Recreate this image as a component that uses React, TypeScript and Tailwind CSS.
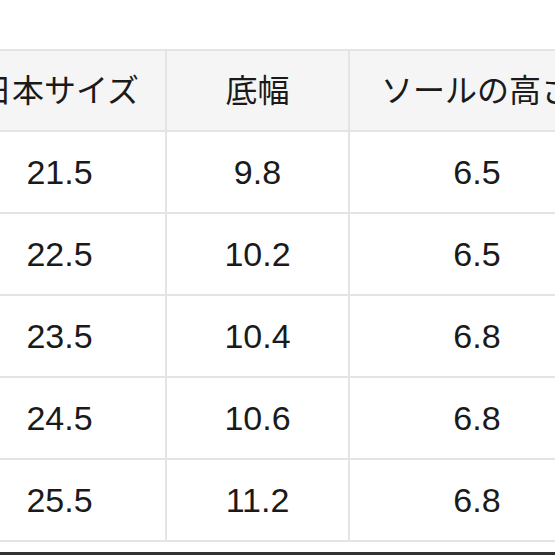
const headers = ['日本サイズ', '底幅', 'ソールの高さ'];

const rows = [
  ['21.5', '9.8', '6.5'],
  ['22.5', '10.2', '6.5'],
  ['23.5', '10.4', '6.8'],
  ['24.5', '10.6', '6.8'],
  ['25.5', '11.2', '6.8'],
];

export default function App() {
  return (
    <div
      className="w-[555px] h-[555px] overflow-hidden bg-white flex flex-col text-[#1a1a1a]"
      style={{ fontFamily: '"Liberation Sans", "Noto Sans CJK JP", sans-serif' }}
    >
      <div className="mt-[49px] ml-[-46px] w-[652px] border-t-2 border-[#e4e4e4] grid grid-cols-[213px_183px_256px]">
        {headers.map((h) => (
          <div
            key={h}
            className="h-[81px] flex items-center justify-center bg-[#f5f5f5] border-r-2 border-b-2 border-[#e4e4e4] text-[32px] whitespace-nowrap"
          >
            {h}
          </div>
        ))}
        {rows.map((r, i) =>
          r.map((v, j) => (
            <div
              key={`${i}-${j}`}
              className="h-[82px] flex items-center justify-center border-r-2 border-b-2 border-[#e4e4e4] text-[34px]"
            >
              {v}
            </div>
          ))
        )}
      </div>
      <div className="mt-auto h-[3px] bg-[#333333]" />
    </div>
  );
}
